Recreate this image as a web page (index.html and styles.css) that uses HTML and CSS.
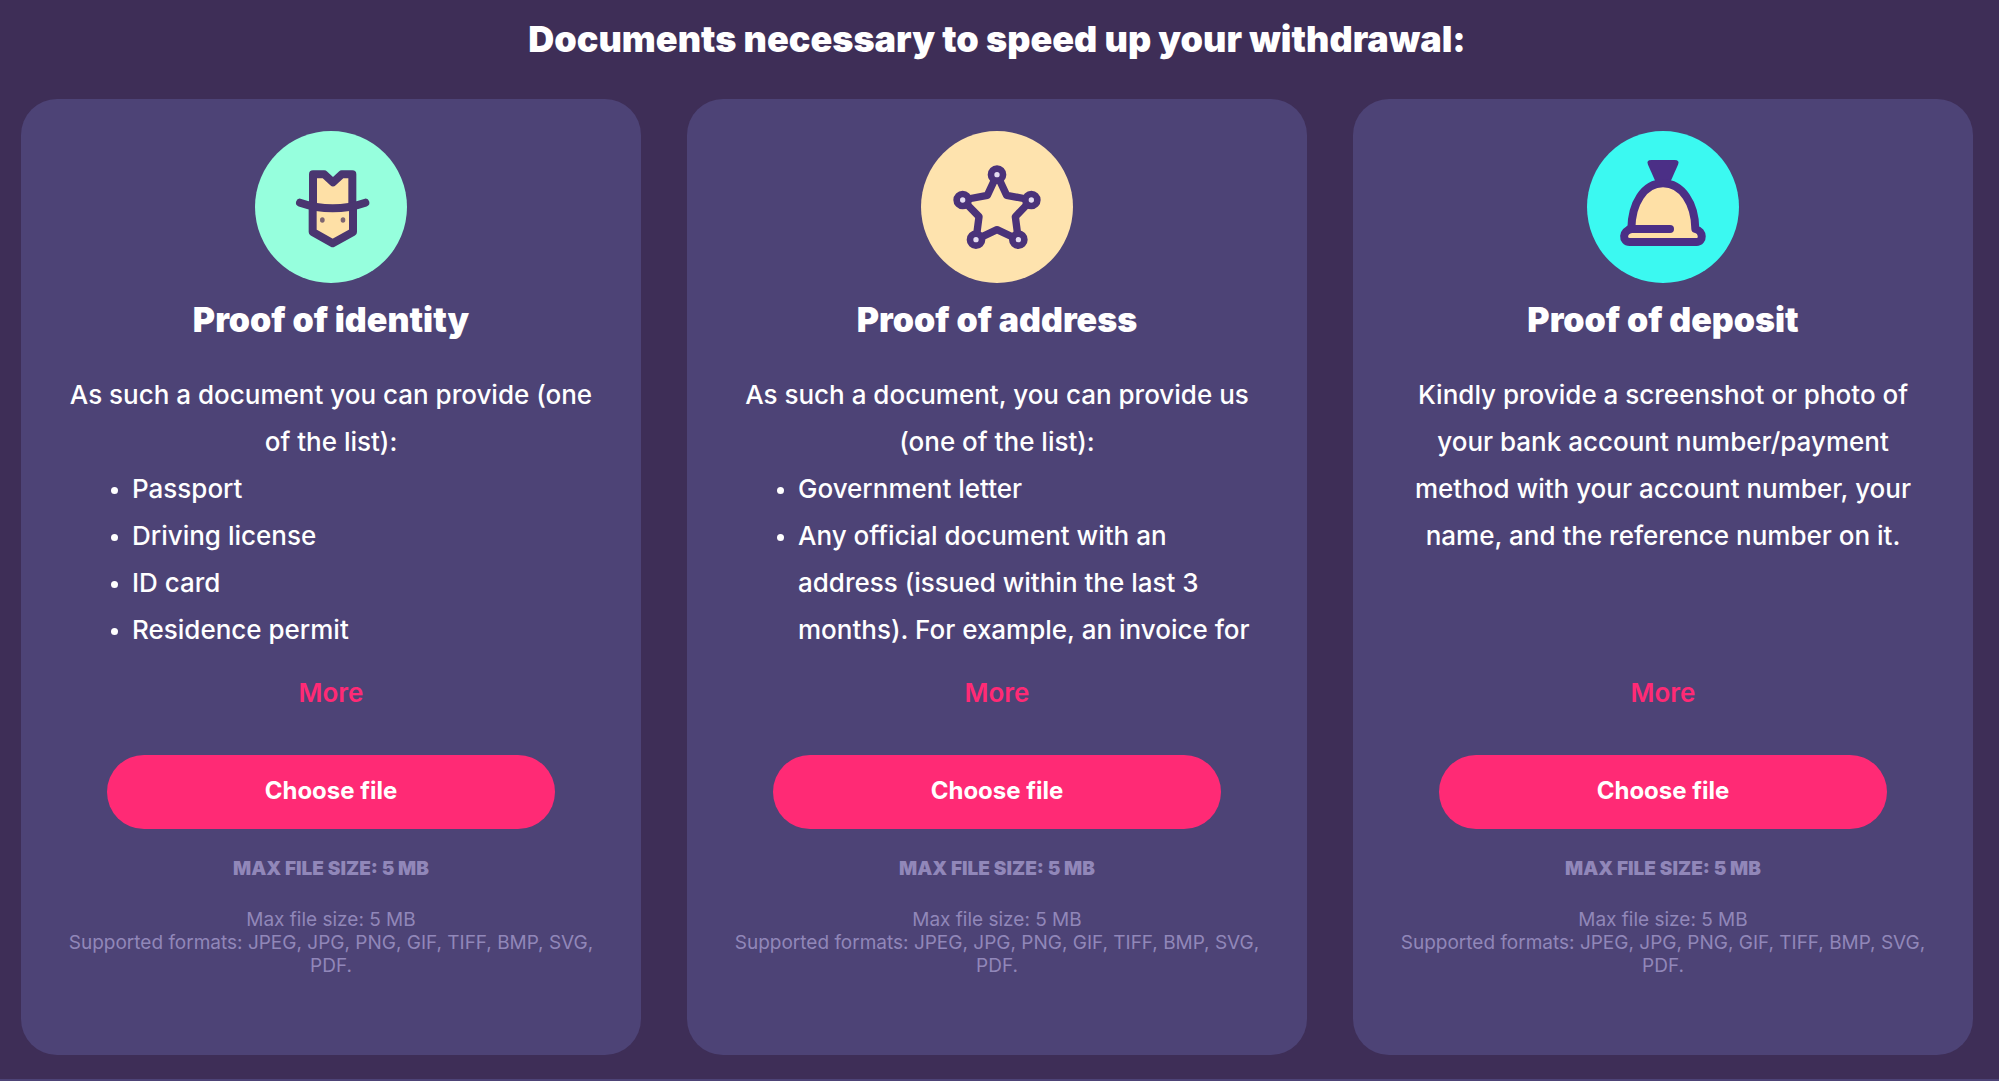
FILE: index.html
```html
<!DOCTYPE html>
<html lang="en">
<head>
    <meta charset="UTF-8">
    <meta name="viewport" content="width=device-width, initial-scale=1.0">
    <title>Account verification</title>
    <link rel="stylesheet" href="styles.css">
</head>
<body>
    <main class="documents">
        <h1>Documents necessary to speed up your withdrawal:</h1>

        <div class="cards">
            <section class="card">
                <svg class="card-icon" viewBox="43 33 456 456" aria-hidden="true">
                    <circle cx="271" cy="261" r="228" fill="#96ffdd"/>
                    <g fill="#fee0a6" stroke="#4a3670" stroke-width="24" stroke-linejoin="round" stroke-linecap="round">
                        <path d="M217 255V163H251L277 187L303 163H335V255"/>
                        <path d="M216 258V336L276 370L337 336V258"/>
                        <path d="M178 248Q276 282 374 248" fill="none"/>
                    </g>
                    <ellipse cx="245" cy="300" rx="7" ry="8" fill="#7d6470"/>
                    <ellipse cx="307" cy="300" rx="7" ry="8" fill="#7d6470"/>
                </svg>
                <h2>Proof of identity</h2>
                <div class="description">
                    <p>As such a document you can provide (one of the list):</p>
                    <ul>
                        <li>Passport</li>
                        <li>Driving license</li>
                        <li>ID card</li>
                        <li>Residence permit</li>
                    </ul>
                </div>
                <a href="#" class="more">More</a>
                <button type="button" class="choose">Choose file</button>
                <p class="limit">Max file size: 5 MB</p>
                <p class="formats">Max file size: 5 MB<br>Supported formats: JPEG, JPG, PNG, GIF, TIFF, BMP, SVG, PDF.</p>
            </section>

            <section class="card">
                <svg class="card-icon" viewBox="32 33 456 456" aria-hidden="true">
                    <circle cx="260" cy="261" r="228" fill="#fee3ae"/>
                    <path d="M260 164L289 226L363 240L315 290L324 359L260 329L197 359L206 290L157 240L231 226Z" fill="#fee3ae" stroke="#4a3279" stroke-width="22" stroke-linejoin="round"/>
                    <g fill="#e4dcf0" stroke="#4a3279" stroke-width="20">
                        <circle cx="260" cy="164" r="18"/>
                        <circle cx="363" cy="240" r="18"/>
                        <circle cx="324" cy="359" r="18"/>
                        <circle cx="197" cy="359" r="18"/>
                        <circle cx="157" cy="240" r="18"/>
                    </g>
                </svg>
                <h2>Proof of address</h2>
                <div class="description">
                    <p>As such a document, you can provide us (one of the list):</p>
                    <ul>
                        <li>Government letter</li>
                        <li>Any official document with an address (issued within the last 3 months). For example, an invoice for</li>
                    </ul>
                </div>
                <a href="#" class="more">More</a>
                <button type="button" class="choose">Choose file</button>
                <p class="limit">Max file size: 5 MB</p>
                <p class="formats">Max file size: 5 MB<br>Supported formats: JPEG, JPG, PNG, GIF, TIFF, BMP, SVG, PDF.</p>
            </section>

            <section class="card">
                <svg class="card-icon" viewBox="37 33 456 456" aria-hidden="true">
                    <circle cx="265" cy="261" r="228" fill="#3bf9f1"/>
                    <path d="M230 120H300Q316 120 310 134L288 184H242L220 134Q214 120 230 120Z" fill="#4b2f86"/>
                    <g fill="#fee0a6" stroke="#4b2f86" stroke-width="24" stroke-linejoin="round" stroke-linecap="round">
                        <path d="M170 327C171 250 208 190 265 190C322 190 361 250 362 327C388 334 386 366 366 366H165C142 366 142 332 170 327Z"/>
                        <path d="M166 327H286" fill="none"/>
                    </g>
                </svg>
                <h2>Proof of deposit</h2>
                <div class="description">
                    <p>Kindly provide a screenshot or photo of your bank account number/payment method with your account number, your name, and the reference number on it.</p>
                </div>
                <a href="#" class="more">More</a>
                <button type="button" class="choose">Choose file</button>
                <p class="limit">Max file size: 5 MB</p>
                <p class="formats">Max file size: 5 MB<br>Supported formats: JPEG, JPG, PNG, GIF, TIFF, BMP, SVG, PDF.</p>
            </section>
        </div>
    </main>
</body>
</html>
```
FILE: styles.css
```css
* {
    box-sizing: border-box;
}
body {
    margin: 0;
    font-family: Inter, "Liberation Sans", sans-serif;
    background-color: #3e2e57;
    color: #fff;
}
.documents {
    min-height: 100vh;
    padding: 17px 26px 24px 21px;
    border-bottom: 2px solid #4d4376;
}
h1,
h2,
p,
ul {
    margin: 0;
}
h1 {
    margin-bottom: 38px;
    font-size: 36px;
    font-weight: 900;
    line-height: 44px;
    text-align: center;
}
.cards {
    display: grid;
    grid-template-columns: repeat(3, 1fr);
    gap: 46px;
}
.card {
    display: flex;
    flex-direction: column;
    align-items: center;
    padding: 32px 46px 78px;
    background-color: #4d4376;
    border-radius: 36px;
    text-align: center;
}
.card-icon {
    width: 152px;
    height: 152px;
}
h2 {
    margin: 14px 0 28px;
    font-size: 34px;
    font-weight: 900;
    line-height: 46px;
}
.description {
    width: 100%;
    height: 282px;
    overflow: hidden;
    font-size: 26px;
    font-weight: 500;
    line-height: 47px;
}
.description ul {
    padding-left: 65px;
    text-align: left;
}
.description li::marker {
    font-size: 22px;
}
.more {
    margin: 20px 0 42px;
    color: #ff2a75;
    font-size: 26px;
    font-weight: 600;
    line-height: 40px;
    text-decoration: none;
}
.choose {
    width: calc(100% - 80px);
    height: 74px;
    padding-bottom: 4px;
    border: none;
    border-radius: 37px;
    background-color: #ff2a75;
    color: #fff;
    font-family: inherit;
    font-size: 24px;
    font-weight: bold;
    cursor: pointer;
}
.limit {
    margin: 28px 0 27px;
    color: #9187b9;
    font-size: 19px;
    font-weight: 900;
    line-height: 24px;
    text-transform: uppercase;
}
.formats {
    color: #9187b9;
    font-size: 19px;
    line-height: 23px;
}
```
